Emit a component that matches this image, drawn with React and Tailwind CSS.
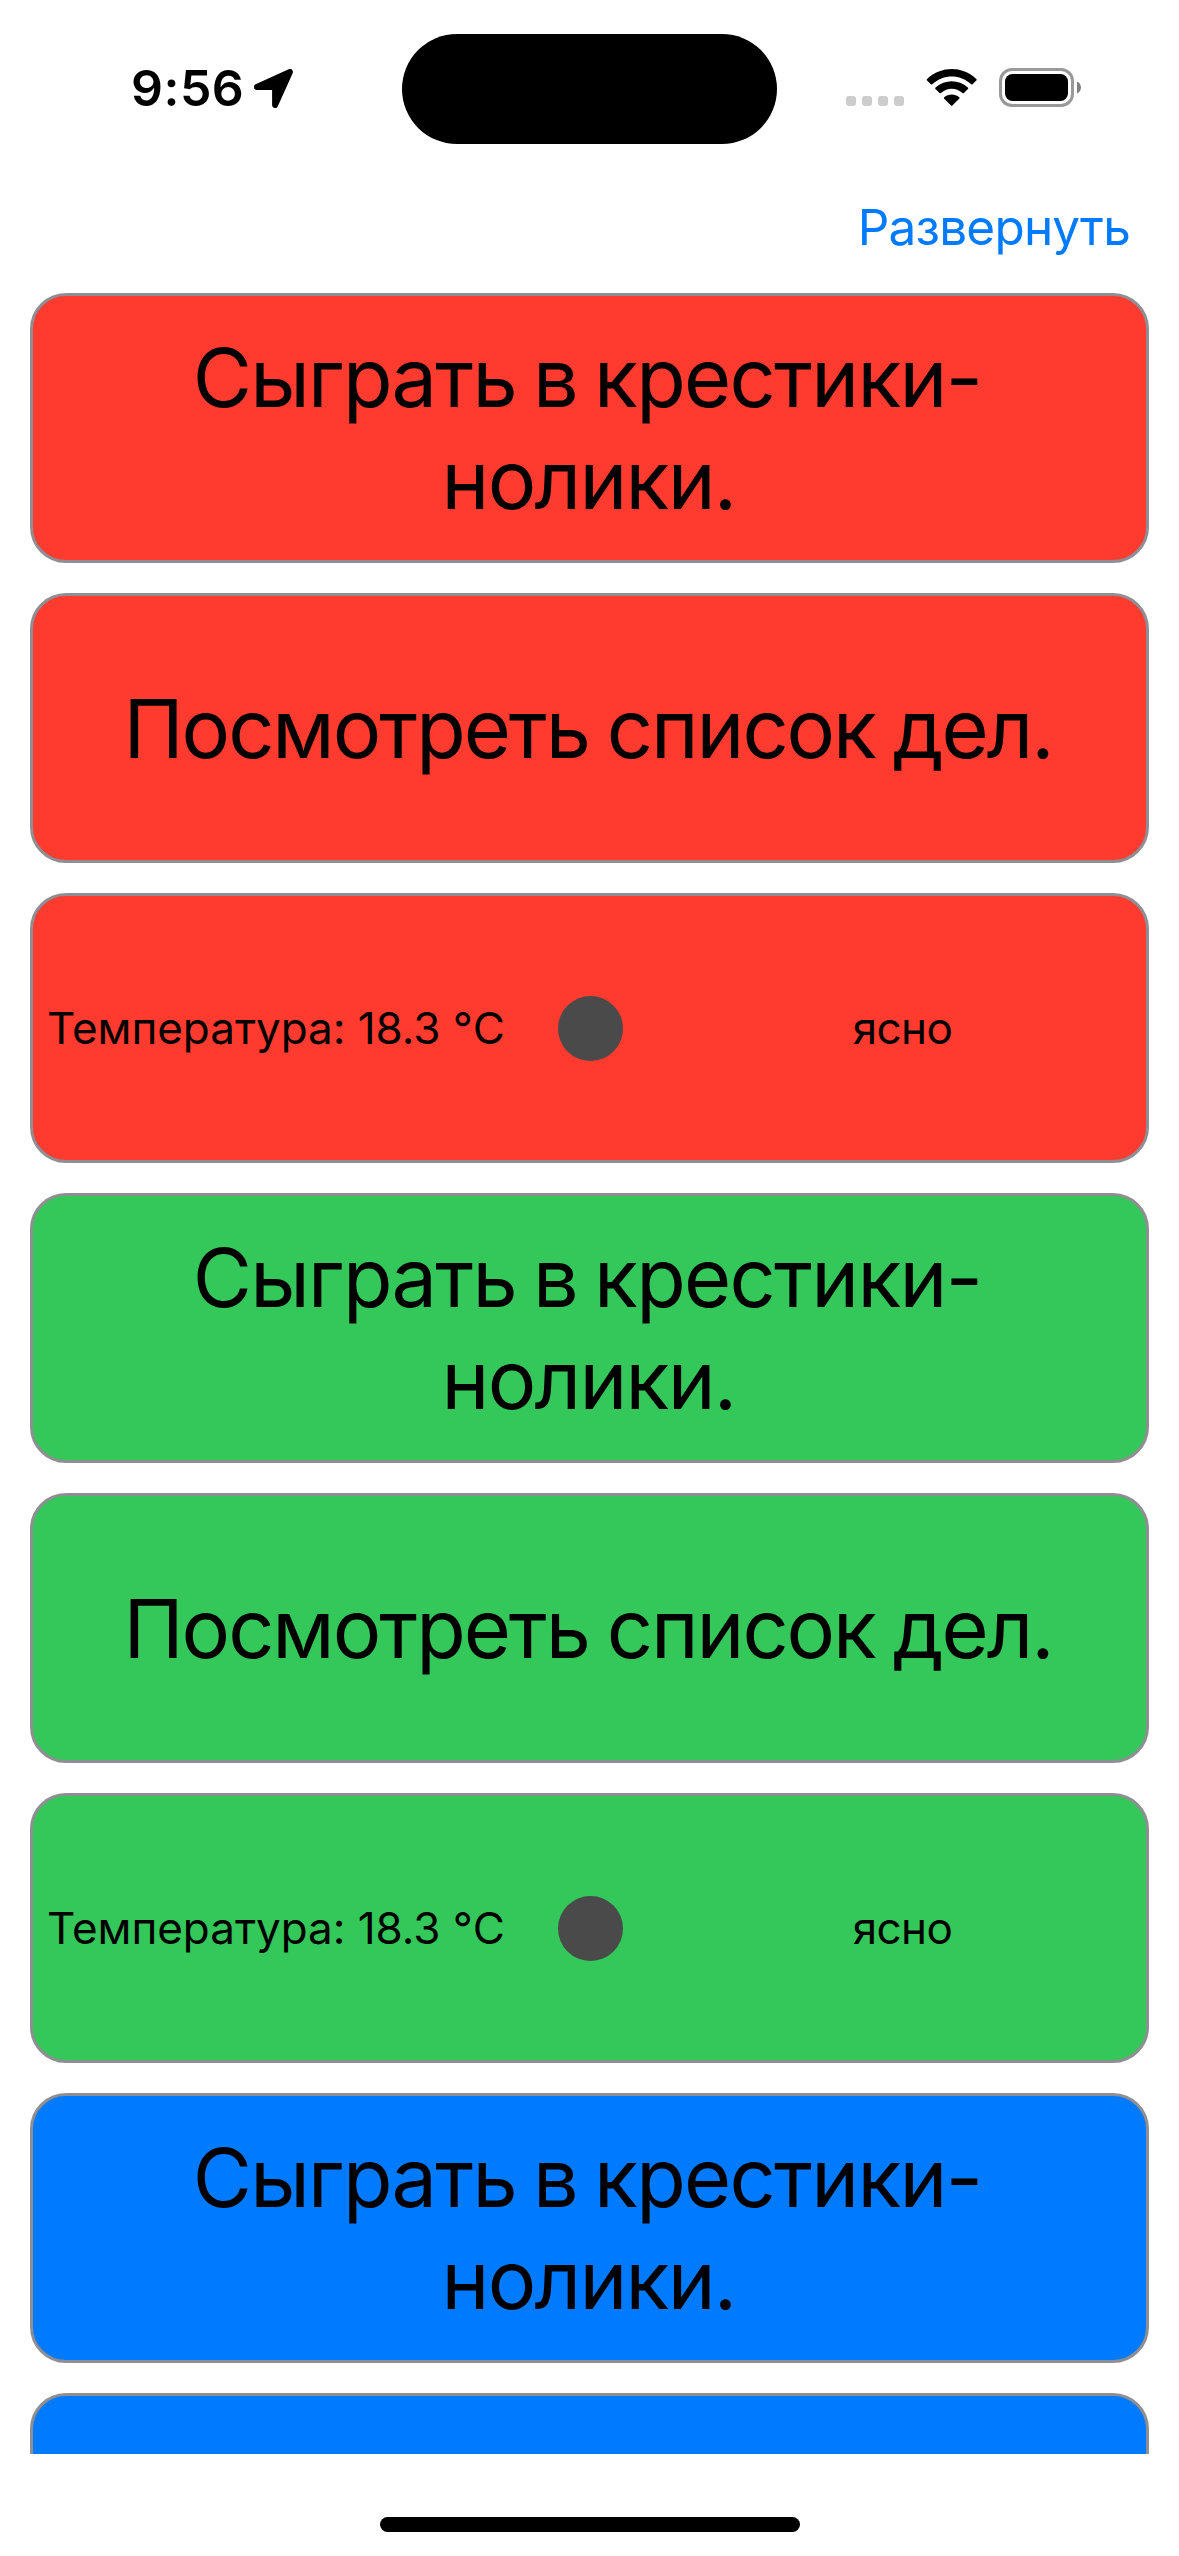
const CARD = "h-[270px] shrink-0 rounded-[36px] border-3 border-[#8e8e93]";

function StatusBar() {
  return (
    <header className="flex h-[178px] shrink-0 items-start pt-[34px]">
      <div className="flex h-[110px] w-[402px] items-center pl-[131px]">
        <span className="mb-[2px] w-[113px] text-[50px] leading-[108px] font-[570] tracking-[0.5px]">9:56</span>
        <svg className="ml-[9px] h-10 w-10" viewBox="253 69 40 40">
          <path
            d="M256.9 87.1 289.9 72 275.1 105V87.1Z"
            stroke="#000"
            strokeWidth="6"
            strokeLinejoin="round"
          />
        </svg>
      </div>
      <div className="h-[110px] w-[375px] rounded-full bg-black" />
      <div className="flex h-[107px] items-center pl-[69px]">
        <div className="mt-[27px] flex gap-1.5">
          {[0, 1, 2, 3].map((dot) => (
            <span key={dot} className="h-2.5 w-2.5 rounded-[3px] bg-[#cccccc]" />
          ))}
        </div>
        <svg className="ml-[22px] h-[40px] w-[52px]" viewBox="926 68 52 40">
          <path d="M927.1 80.4a1 1 0 0 1 0-1.5C941.5 65.7 962 65.7 976.3 78.9a1 1 0 0 1 0 1.5L972.6 84.2a1 1 0 0 1-1.4 0C960 73.800 943.500 73.800 932.200 84.200a1 1 0 0 1-1.400 0Z" />
          <path d="M935.5 88.9a1 1 0 0 1 0-1.5C945 79.2 958.5 79.2 967.9 87.4a1 1 0 0 1 0 1.5L963.9 92.9a1 1 0 0 1-1.4 0C956 87.2 947.5 87.2 940.9 92.9a1 1 0 0 1-1.4 0Z" />
          <path d="M944.2 98.7a1 1 0 0 1 0-1.5C948.5 93.5 955 93.5 959.2 97.2a1 1 0 0 1 0 1.5L952.4 105.5a1 1 0 0 1-1.4 0Z" />
        </svg>
        <svg className="ml-[21px] h-[39px] w-[83px]" viewBox="999 68 83 39">
          <rect x="1000.5" y="69.5" width="72" height="36" rx="11.5" fill="none" stroke="#999" strokeWidth="3" />
          <rect x="1005" y="74" width="63" height="27" rx="7.5" />
          <path d="M1077 81.500c5.300 2 5.300 10 0 12Z" fill="#808080" />
        </svg>
      </div>
    </header>
  );
}

function GameCard({ color }) {
  return (
    <button className={`${CARD} ${color} flex flex-col items-center justify-center pt-[2px] text-[81px] leading-[102px]`}>
      <span className="pr-[5px] tracking-[-1.75px] [word-spacing:-4px]">Сыграть в крестики-</span>
      <span className="pr-[2px] tracking-[-1.75px]">нолики.</span>
    </button>
  );
}

function TodoCard({ color }) {
  return (
    <button className={`${CARD} ${color} flex items-center justify-center pt-[2px] text-[81px] leading-[102px]`}>
      <span className="pr-[3px] tracking-[-2.05px] [word-spacing:-3px]">Посмотреть список дел.</span>
    </button>
  );
}

function WeatherCard({ color }) {
  return (
    <div className={`${CARD} ${color} flex items-center pl-[14px] text-[44px] leading-[54px]`}>
      <span className="w-[511px] whitespace-nowrap tracking-[-0.03px]">Температура: 18.3 °C</span>
      <span className="size-[65px] shrink-0 rounded-full bg-[#4a4a4a]" />
      <span className="ml-10 w-[479px] text-center tracking-[-0.6px]">ясно</span>
    </div>
  );
}

function CardGroup({ color }) {
  return (
    <>
      <GameCard color={color} />
      <TodoCard color={color} />
      <WeatherCard color={color} />
    </>
  );
}

export default function App() {
  return (
    <div className="flex h-[2556px] w-[1179px] flex-col overflow-hidden bg-white font-['Inter',sans-serif] text-black">
      <StatusBar />
      <nav className="flex h-[115px] shrink-0 justify-end pr-[49px]">
        <button className="h-[99px] text-[49.5px] leading-[99px] tracking-[-0.8px] text-[#007aff]">
          Развернуть
        </button>
      </nav>
      <main className="flex h-[2161px] shrink-0 flex-col gap-[30px] overflow-hidden px-[30px]">
        <CardGroup color="bg-[#ff3b30]" />
        <CardGroup color="bg-[#34c759]" />
        <GameCard color="bg-[#007aff]" />
        <div className={`${CARD} bg-[#007aff]`} />
      </main>
      <div className="mx-auto mt-[63px] h-[15px] w-[420px] shrink-0 rounded-full bg-black" />
    </div>
  );
}
